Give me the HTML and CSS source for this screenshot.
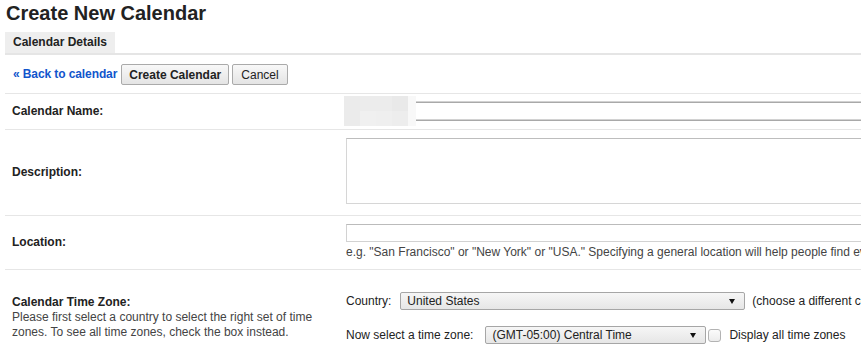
FILE: index.html
```html
<!doctype html>
<html lang="en">
<head>
<meta charset="utf-8">
<title>Create New Calendar</title>
<meta name="viewport" content="width=device-width,initial-scale=1">
<link rel="stylesheet" href="styles.css">
</head>
<body>
<div class="page">
  <h1>Create New Calendar</h1>

  <div class="tabs"><span class="tab">Calendar Details</span></div>

  <div class="toolbar">
    <a class="back" href="#">« Back to calendar</a>
    <button class="btn btn-main">Create Calendar</button>
    <button class="btn">Cancel</button>
  </div>

  <div class="form">
    <div class="row row-name">
      <div class="label">Calendar Name:</div>
      <div class="field">
        <div class="redact">
          <span class="c1"></span><span class="c2"></span><span class="c2"></span><span class="c3"></span>
          <span class="c1"></span><span class="c4"></span><span class="c5"></span><span class="c6"></span>
        </div>
        <input class="name-input" id="calName">
      </div>
    </div>

    <div class="row row-desc">
      <div class="label">Description:</div>
      <div class="field"><textarea id="calDesc"></textarea></div>
    </div>

    <div class="row row-loc">
      <div class="label">Location:</div>
      <div class="field col">
        <input class="loc-input" id="calLoc">
        <div class="hint">e.g. "San Francisco" or "New York" or "USA." Specifying a general location will help people find events on your calendar (if it's public)</div>
      </div>
    </div>

    <div class="row row-tz">
      <div class="label col">
        <b>Calendar Time Zone:</b>
        <p class="note">Please first select a country to select the right set of time zones. To see all time zones, check the box instead.</p>
      </div>
      <div class="field col">
        <div class="line">
          <span class="lbl-country">Country:</span>
          <span class="sel sel-country"><select id="country"><option>United States</option></select></span>
          <span class="aside">(choose a different country to see other time zones)</span>
        </div>
        <div class="line line-tz">
          <span class="lbl-tz">Now select a time zone:</span>
          <span class="sel sel-tz"><select id="tz"><option>(GMT-05:00) Central Time</option></select></span>
          <input type="checkbox" id="allTz">
          <label for="allTz">Display all time zones</label>
        </div>
      </div>
    </div>
  </div>
</div>
</body>
</html>
```

FILE: styles.css
```css
html,body{overflow:hidden}
body{margin:0;background:#fff;color:#222;font:12px/15px "Liberation Sans",Arial,sans-serif}
.page{width:1100px;padding:1px 0 0 5px}
h1{margin:0 0 0 1px;font-size:20px;line-height:24px;font-weight:bold;color:#222}

.tabs{display:flex;margin-top:7px;border-bottom:2px solid #e5e5e5}
.tab{background:#eee;padding:0 8px;line-height:21px;font-weight:bold}

.toolbar{display:flex;align-items:center;padding:9px 0 8px 8px}
.back{color:#15c;font-weight:bold;text-decoration:none;margin-right:4px;letter-spacing:-.1px}
.btn{height:21px;padding:0 8px;margin-right:3px;border:1px solid #aaa;border-radius:2px;background:linear-gradient(#f8f8f8,#e4e4e4);font:12px "Liberation Sans",Arial,sans-serif;color:#222;cursor:pointer}
.btn-main{font-weight:bold;padding:0 7px}

.row{display:grid;grid-template-columns:341px 1fr;border-top:1px solid #e6e6e6}
.label{display:flex;align-items:center;padding-left:7px;font-weight:bold}
.field{display:flex;align-items:flex-start}
.col{flex-direction:column;align-items:flex-start}

.row-name{padding:2px 0 3px}
.redact{display:grid;grid-template-columns:repeat(4,16px);grid-auto-rows:15px;margin-left:-2px;padding-right:8px;background:#f8f8f8}
.redact .c1{background:#ebebeb}.redact .c2{background:#ececec}.redact .c3{background:#e9e9e9}
.redact .c4{background:#f0f0f0}.redact .c5{background:#efefef}.redact .c6{background:#ededed}
.name-input{margin-top:5px;width:600px;height:17px;padding:0;border:0;border-top:1px solid #d2d2d2;border-bottom:1px solid #d2d2d2;box-shadow:inset 0 1px #a9a9a9,0 1px #a9a9a9;background:#fff}

.row-desc{padding:8px 0 11px}
.row-desc .label{padding-top:3px}
textarea{width:700px;height:66px;padding:2px;border:1px solid #d6d6d6;border-top-color:#bdbdbd;resize:none;box-sizing:border-box}

.row-loc{padding:8px 0 9px}
.loc-input{width:700px;height:18px;box-sizing:border-box;border:1px solid #d2d2d2;border-top-color:#bbb;padding:1px 3px}
.hint{margin-top:3px;color:#444;white-space:nowrap}

.row-tz{padding-top:22px;padding-bottom:20px}
.row-tz .label{align-items:flex-start;padding-top:3px}
.note{margin:0;font-weight:normal;color:#444;width:325px}
.line{display:flex;align-items:center;white-space:nowrap;color:#222}
.line-tz{margin-top:16px}
.lbl-country{margin-right:9px}
.lbl-tz{margin-right:12px}
.sel{position:relative;display:inline-flex}
.sel::after{content:"";position:absolute;right:10px;top:7px;border-top:5px solid #111;border-left:3.5px solid transparent;border-right:3.5px solid transparent}
select{appearance:none;-webkit-appearance:none;height:18px;padding:0 0 0 6px;border:1px solid #a6a6a6;border-radius:2px;background:linear-gradient(#f6f6f6,#e6e6e6);font:12px "Liberation Sans",Arial,sans-serif;color:#222}
.sel-country select{width:345px}
.sel-tz select{width:221px}
.aside{margin-left:7px}
input[type=checkbox]{appearance:none;-webkit-appearance:none;width:13px;height:13px;margin:0 8px 0 2px;border:1px solid #b3b3b3;border-radius:3px;background:linear-gradient(#fbfbfb,#ececec)}
```
